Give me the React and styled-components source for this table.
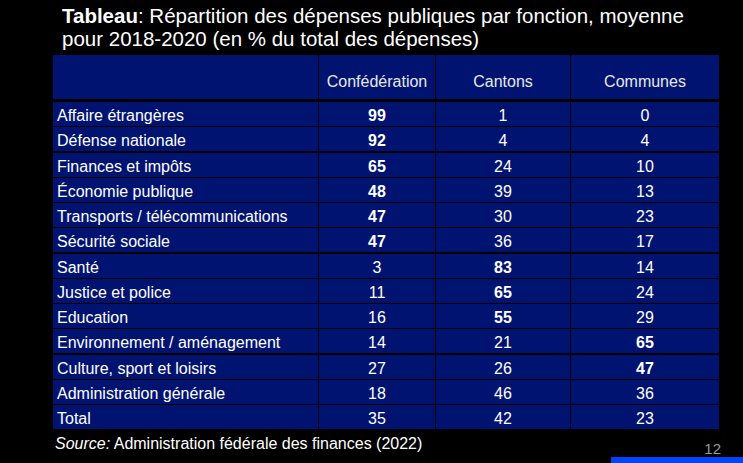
import React from "react";
import styled, { createGlobalStyle } from "styled-components";

const Global = createGlobalStyle`
  html, body { margin: 0; padding: 0; background: #000; }
  body { font-family: "Liberation Sans", Arial, sans-serif; }
`;

const Slide = styled.div`
  position: relative;
  width: 743px;
  height: 463px;
  background: #000;
  overflow: hidden;
  color: #fff;
`;

const Title = styled.h1`
  margin: 0;
  padding: 4px 0 0 62px;
  font-size: 20.5px;
  line-height: 23px;
  font-weight: normal;
  color: #fff;
  b { font-weight: bold; }
`;

const Table = styled.div`
  margin: 5px 0 0 53px;
  width: 666px;
  display: grid;
  grid-template-columns: 265px 116px 134px 148px;
  column-gap: 1px;
  background: #000;
`;

const HeadCell = styled.div`
  height: 44px;
  background: #001370;
  color: #e8e8e8;
  font-size: 16px;
  display: flex;
  align-items: flex-end;
  justify-content: center;
  padding-bottom: 8px;
  box-sizing: border-box;
`;

const Body = styled.div`
  grid-column: 1 / -1;
  margin-top: 3px;
  display: grid;
  grid-template-columns: 265px 116px 134px 148px;
  column-gap: 1px;
  row-gap: 1.25px;
`;

const Cell = styled.div`
  height: 24px;
  background: #001370;
  font-size: 16px;
  line-height: 28px;
  padding: ${(p) => (p.$left ? "0 0 0 4px" : "0")};
  text-align: ${(p) => (p.$left ? "left" : "center")};
  font-weight: ${(p) => (p.$bold ? "bold" : "normal")};
  color: #fff;
  white-space: nowrap;
`;

const Source = styled.div`
  margin: 6px 0 0 55px;
  font-size: 16px;
  line-height: 18px;
  i { font-style: italic; }
`;

const Footer = styled.div`
  position: absolute;
  right: 0;
  bottom: 0;
  display: flex;
  flex-direction: column;
  align-items: flex-end;
`;

const PageNo = styled.div`
  font-size: 15px;
  line-height: 14px;
  color: #9a9a9a;
  padding-right: 22px;
  padding-bottom: 1px;
`;

const Bar = styled.div`
  width: 132px;
  height: 6px;
  background: #0044ff;
`;

const rows = [
  ["Affaire étrangères", 99, 1, 0, 0],
  ["Défense nationale", 92, 4, 4, 0],
  ["Finances et impôts", 65, 24, 10, 0],
  ["Économie publique", 48, 39, 13, 0],
  ["Transports / télécommunications", 47, 30, 23, 0],
  ["Sécurité sociale", 47, 36, 17, 0],
  ["Santé", 3, 83, 14, 1],
  ["Justice et police", 11, 65, 24, 1],
  ["Education", 16, 55, 29, 1],
  ["Environnement / aménagement", 14, 21, 65, 2],
  ["Culture, sport et loisirs", 27, 26, 47, 2],
  ["Administration générale", 18, 46, 36, -1],
  ["Total", 35, 42, 23, -1],
];

export default function App() {
  return (
    <>
      <Global />
      <Slide>
        <Title>
          <b>Tableau</b>: Répartition des dépenses publiques par fonction, moyenne
          <br />
          pour 2018-2020 (en % du total des dépenses)
        </Title>
        <Table>
          <HeadCell />
          <HeadCell>Confédération</HeadCell>
          <HeadCell>Cantons</HeadCell>
          <HeadCell>Communes</HeadCell>
          <Body>
            {rows.map(([label, a, b, c, bold]) => (
              <React.Fragment key={label}>
                <Cell $left>{label}</Cell>
                <Cell $bold={bold === 0}>{a}</Cell>
                <Cell $bold={bold === 1}>{b}</Cell>
                <Cell $bold={bold === 2}>{c}</Cell>
              </React.Fragment>
            ))}
          </Body>
        </Table>
        <Source>
          <i>Source:</i> Administration fédérale des finances (2022)
        </Source>
        <Footer>
          <PageNo>12</PageNo>
          <Bar />
        </Footer>
      </Slide>
    </>
  );
}
